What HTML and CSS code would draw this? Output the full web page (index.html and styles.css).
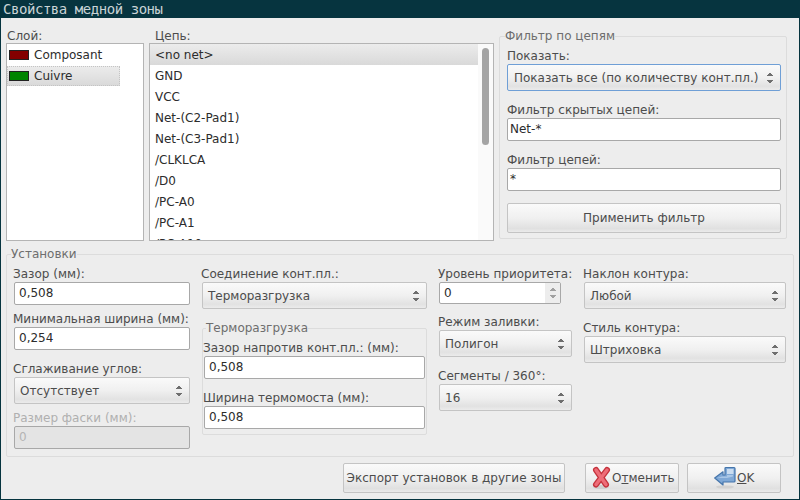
FILE: index.html
```html
<!DOCTYPE html>
<html>
<head>
  <meta charset="UTF-8">
  <title>Свойства медной зоны</title>
  <link rel="stylesheet" href="styles.css">
</head>
<body>
  <div class="window">
    <div class="titlebar">Свойства медной зоны</div>

    <div class="top">
      <div class="layer-col">
        <label class="cap">Слой:</label>
        <div class="listbox layer-list">
          <div class="layer-row"><span class="swatch swatch-red"></span>Composant</div>
          <div class="layer-row selected"><span class="swatch swatch-green"></span>Cuivre</div>
        </div>
      </div>

      <div class="net-col">
        <label class="cap">Цепь:</label>
        <div class="listbox net-list">
          <div class="net-rows">
            <div class="net-row selected">&lt;no net&gt;</div>
            <div class="net-row">GND</div>
            <div class="net-row">VCC</div>
            <div class="net-row">Net-(C2-Pad1)</div>
            <div class="net-row">Net-(C3-Pad1)</div>
            <div class="net-row">/CLKLCA</div>
            <div class="net-row">/D0</div>
            <div class="net-row">/PC-A0</div>
            <div class="net-row">/PC-A1</div>
            <div class="net-row">/PC-A10</div>
          </div>
          <div class="scrolltrack"><div class="scrollthumb"></div></div>
        </div>
      </div>

      <fieldset class="group filter-group">
        <legend>Фильтр по цепям</legend>
        <label class="cap">Показать:</label>
        <div class="combo focused">Показать все (по количеству конт.пл.)<span class="arrows"></span></div>
        <label class="cap wide">Фильтр скрытых цепей:</label>
        <div class="input">Net-*</div>
        <label class="cap wide">Фильтр цепей:</label>
        <div class="input">*</div>
        <div class="button apply">Применить фильтр</div>
      </fieldset>
    </div>

    <fieldset class="group settings">
      <legend>Установки</legend>
      <div class="col col-1">
        <label class="cap">Зазор (мм):</label>
        <div class="input">0,508</div>
        <label class="cap next">Минимальная ширина (мм):</label>
        <div class="input">0,254</div>
        <label class="cap wide">Сглаживание углов:</label>
        <div class="combo">Отсутствует<span class="arrows"></span></div>
        <label class="cap next disabled">Размер фаски (мм):</label>
        <div class="input disabled-input">0</div>
      </div>

      <div class="col col-2">
        <label class="cap">Соединение конт.пл.:</label>
        <div class="combo">Терморазгрузка<span class="arrows"></span></div>
        <fieldset class="group thermal">
          <legend>Терморазгрузка</legend>
          <label class="cap">Зазор напротив конт.пл.: (мм):</label>
          <div class="input">0,508</div>
          <label class="cap wide">Ширина термомоста (мм):</label>
          <div class="input">0,508</div>
        </fieldset>
      </div>

      <div class="col col-3">
        <label class="cap">Уровень приоритета:</label>
        <div class="spin">
          <div class="spin-value">0</div>
          <div class="spin-btn"><span class="arrows"></span></div>
        </div>
        <label class="cap mode">Режим заливки:</label>
        <div class="combo">Полигон<span class="arrows"></span></div>
        <label class="cap wide">Сегменты / 360°:</label>
        <div class="combo">16<span class="arrows"></span></div>
      </div>

      <div class="col col-4">
        <label class="cap">Наклон контура:</label>
        <div class="combo">Любой<span class="arrows"></span></div>
        <label class="cap wide">Стиль контура:</label>
        <div class="combo">Штриховка<span class="arrows"></span></div>
      </div>
    </fieldset>

    <div class="actions">
      <div class="button export">Экспорт установок в другие зоны</div>
      <div class="button cancel">
        <svg class="icon" width="20" height="24" viewBox="0 0 20 24">
          <ellipse cx="9" cy="21" rx="8" ry="2" fill="#cfcfcf"/>
          <path d="M4 4 L14 18.5 M15 4 L4 18.5" stroke="#c4323c" stroke-width="6" stroke-linecap="round" fill="none"/>
          <path d="M4 4 L14 18.5 M15 4 L4 18.5" stroke="#ee6d78" stroke-width="3.4" stroke-linecap="round" fill="none"/>
        </svg>
        <span>О<u>т</u>менить</span>
      </div>
      <div class="button ok">
        <svg class="icon" width="23" height="24" viewBox="0 0 23 24">
          <ellipse cx="11" cy="21" rx="9" ry="1.6" fill="#d2d2d2"/>
          <path d="M0.7 12 L9 5.8 L9 9 L11 9 L11 2.5 Q11 1.5 12 1.5 L20 1.5 Q21 1.5 21 2.5 L21 15 Q21 16 20 16 L9 16 L9 19 Z" fill="#7fa8d6" stroke="#4575ab" stroke-width="1.2" stroke-linejoin="round"/>
          <path d="M13 3 L19.5 3 L19.5 8 L13 8 Z" fill="#c9dcf0"/>
          <path d="M3 12 L8 10.5 L13 10.5 L13 9 L19 9 L19 10.5 L13 12 Z" fill="#a9c6e6"/>
        </svg>
        <span><u>O</u>K</span>
      </div>
    </div>
  </div>
</body>
</html>
```

FILE: styles.css
```css
* {
  box-sizing: border-box;
}

html, body {
  margin: 0;
  padding: 0;
}

body {
  width: 800px;
  height: 500px;
  overflow: hidden;
  font-family: "DejaVu Sans", sans-serif;
  font-size: 12px;
  color: #4c4c4c;
}

.window {
  width: 800px;
  height: 500px;
  background-color: #ededed;
  border: 1px solid #06343f;
  border-top: none;
  display: flex;
  flex-direction: column;
}

.titlebar {
  height: 18px;
  flex: none;
  margin: 0 -1px;
  padding-left: 3px;
  background-color: #06343f;
  color: #c9d3d6;
  font-family: "DejaVu Sans Mono", monospace;
  font-size: 14px;
  letter-spacing: -0.45px;
  line-height: 18px;
  white-space: nowrap;
}

.cap {
  display: block;
  height: 14px;
  margin-bottom: 1px;
  line-height: 14px;
  white-space: nowrap;
}

.next {
  margin-top: 7px;
}

.wide {
  margin-top: 12px;
}

/* top part */
.top {
  display: flex;
  height: 223px;
  flex: none;
  padding: 11px 0 0 5px;
}

.layer-col {
  width: 138px;
  margin-right: 5px;
  flex: none;
}

.layer-col .cap {
  margin: 0 0 0 1px;
}

.net-col {
  width: 345px;
  margin-right: 5px;
  flex: none;
}

.net-col .cap {
  margin: 0 0 0 6px;
}

.listbox {
  height: 198px;
  background-color: #ffffff;
  border: 1px solid #b4b4b4;
  color: #2c2c2c;
}

.layer-list {
  padding-top: 1px;
}

.layer-row {
  width: 113px;
  height: 20px;
  margin-bottom: 1px;
  padding-left: 2px;
  display: flex;
  align-items: center;
  line-height: 20px;
}

.layer-row.selected {
  background: linear-gradient(#ececec, #d9d9d9);
  outline: 1px dotted #c4c4c4;
  outline-offset: -1px;
}

.swatch {
  width: 20px;
  height: 10px;
  margin-right: 5px;
  border: 1px solid #222;
}

.swatch-red {
  background-color: #840000;
}

.swatch-green {
  background-color: #008400;
}

.net-list {
  display: flex;
  overflow: hidden;
}

.net-rows {
  width: 328px;
  flex: none;
  overflow: hidden;
}

.net-row {
  height: 21px;
  padding-left: 5px;
  line-height: 22px;
}

.net-row.selected {
  background: linear-gradient(#ececec, #d9d9d9);
}

.scrolltrack {
  flex: 1;
  padding: 4px 0 0 4px;
  background-color: #fafafa;
}

.scrollthumb {
  width: 7px;
  height: 97px;
  background-color: #a4a4a4;
  border-radius: 4px;
}

/* groups */
.group {
  margin: 0;
  padding: 0;
  min-width: 0;
  border: 1px solid #dcdcdc;
  border-radius: 2px;
}

.group legend {
  margin-left: -3px;
  padding: 0;
  height: 14px;
  line-height: 14px;
  color: #6e6e6e;
}

.filter-group {
  width: 288px;
  height: 210px;
  flex: none;
  padding: 6px 5px 0 7px;
}

.filter-group legend {
  margin-left: -2px;
}

.filter-group .input {
  padding-left: 2px;
}

.input {
  height: 23px;
  padding-left: 4px;
  line-height: 21px;
  background-color: #ffffff;
  border: 1px solid #a8a8a8;
  border-radius: 2px;
  color: #2c2c2c;
  white-space: nowrap;
}

.disabled-input {
  background-color: #e4e4e4;
  color: #b4b4b4;
}

.disabled {
  color: #b0b0b0;
}

.combo {
  height: 27px;
  display: flex;
  align-items: center;
  padding-left: 5px;
  background: linear-gradient(#fafafa, #f0f0f0 50%, #e2e2e2 85%, #ebebeb);
  border: 1px solid #c4c4c4;
  border-radius: 2px;
  color: #4c4c4c;
  white-space: nowrap;
}

.combo.focused {
  padding-left: 6px;
  border-color: #6f9fd6;
}

.arrows {
  margin-left: auto;
  margin-right: 7px;
  width: 6px;
  height: 12px;
  flex: none;
  background:
    linear-gradient(to top left, #6e6e6e 50%, transparent 50%) 0 0 / 3px 4px no-repeat,
    linear-gradient(to top right, #6e6e6e 50%, transparent 50%) 3px 0 / 3px 4px no-repeat,
    linear-gradient(to bottom left, #6e6e6e 50%, transparent 50%) 0 8px / 3px 4px no-repeat,
    linear-gradient(to bottom right, #6e6e6e 50%, transparent 50%) 3px 8px / 3px 4px no-repeat;
}

.button {
  display: flex;
  align-items: center;
  justify-content: center;
  background: linear-gradient(#fafafa, #f0f0f0 50%, #e0e0e0 88%, #ebebeb);
  border: 1px solid #c4c4c4;
  border-radius: 2px;
  color: #4c4c4c;
}

.apply {
  height: 30px;
  margin-top: 12px;
}

/* settings */
.settings {
  width: 788px;
  height: 210px;
  margin: 6px 0 0 5px;
  flex: none;
  display: flex;
  padding: 6px 0 0 7px;
}

.settings .cap {
  margin-left: -1px;
}

.col {
  flex: none;
  margin-right: 12px;
}

.col-1 {
  width: 176px;
}

.col-2 {
  width: 225px;
}

.thermal {
  height: 114px;
  margin-top: 12px;
  padding: 6px 0 0 1px;
}

.thermal legend {
  margin-left: 2px;
}

.thermal .input {
  width: 221px;
}

.col-3 {
  width: 133px;
}

.spin {
  display: flex;
  width: 122px;
  height: 22px;
  background-color: #ffffff;
  border: 1px solid #a8a8a8;
  border-radius: 2px;
  color: #2c2c2c;
}

.spin-value {
  flex: 1;
  padding-left: 4px;
  line-height: 20px;
}

.spin-btn {
  width: 15px;
  background-color: #ededed;
  display: flex;
  align-items: center;
}

.spin-btn .arrows {
  margin: 0 auto;
  opacity: 0.6;
}

.mode {
  margin-top: 11px;
}

.col-4 {
  width: 202px;
  margin-right: 0;
}

/* bottom buttons */
.actions {
  display: flex;
  justify-content: flex-end;
  gap: 8px;
  margin-top: 6px;
  padding-right: 18px;
}

.actions .button {
  height: 30px;
}

.export {
  width: 222px;
  margin-right: 12px;
}

.cancel {
  width: 94px;
  justify-content: flex-start;
  padding-left: 6px;
}

.ok {
  width: 94px;
  justify-content: flex-start;
  padding-left: 26px;
}

.icon {
  flex: none;
}
```
